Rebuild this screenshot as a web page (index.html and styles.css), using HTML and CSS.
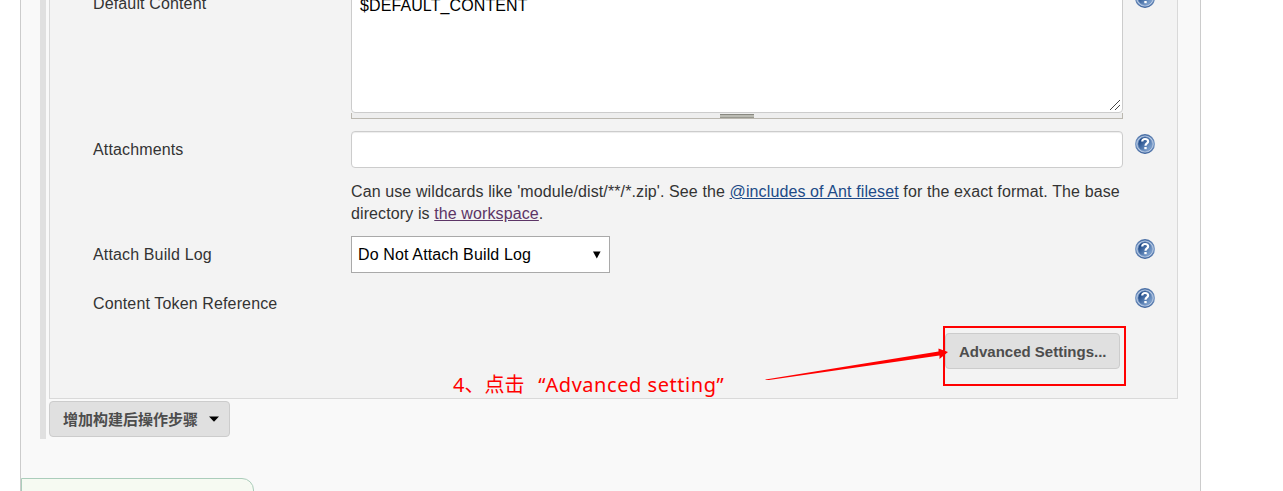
FILE: index.html
```html
<!DOCTYPE html>
<html lang="zh-CN">
<head>
<meta charset="utf-8">
<title>Editable Email Notification</title>
<link rel="stylesheet" href="styles.css">
</head>
<body>
<svg class="defs" width="0" height="0" aria-hidden="true">
  <defs>
    <linearGradient id="ball" x1="0" y1="0" x2="1" y2="1">
      <stop offset="0.2" stop-color="#204a87"/>
      <stop offset="0.9" stop-color="#86aad6"/>
    </linearGradient>
    <linearGradient id="rim" x1="0" y1="0" x2="0" y2="1">
      <stop offset="0" stop-color="#4a6fa5"/>
      <stop offset="0.5" stop-color="#7d9dc8"/>
      <stop offset="1" stop-color="#3f659e"/>
    </linearGradient>
    <symbol id="help" viewBox="0 0 20 20">
      <circle cx="10" cy="10" r="9.3" fill="#b9cbe4" stroke="url(#rim)" stroke-width="1.4"/>
      <circle cx="10" cy="10" r="7.2" fill="url(#ball)" stroke="#6f91c0" stroke-width="0.8"/>
      <path d="M7.2 7.5C7.3 5.8 8.4 5 10 5c1.9 0 3.1.8 3.1 2.4 0 2.1-2.6 2-2.6 4.3" fill="none" stroke="#fff" stroke-width="2.2"/>
      <path d="M9.3 13h2.4v2.2H9.3z" fill="#fff"/>
    </symbol>
  </defs>
</svg>
<main class="page">
  <section class="config">
    <div class="panel">
      <div class="row row-content">
        <span class="label">Default Content</span>
        <div class="field">
          <div class="textarea"><span>$DEFAULT_CONTENT</span>
            <svg class="grip" width="10" height="10" viewBox="0 0 10 10"><path d="M0 10L10 0M5 10l5-5" stroke="#444" stroke-width="1"/></svg>
          </div>
          <div class="handle"><i class="handle-grip"></i></div>
        </div>
        <svg class="help"><use href="#help"/></svg>
      </div>
      <div class="row row-attachments">
        <span class="label">Attachments</span>
        <div class="field"><div class="input"></div></div>
        <svg class="help"><use href="#help"/></svg>
      </div>
      <p class="description">Can use wildcards like 'module/dist/**/*.zip'. See the <a class="link" href="#">@includes of Ant fileset</a> for the exact format. The base<br>directory is <a class="link visited" href="#">the workspace</a>.</p>
      <div class="row row-log">
        <span class="label">Attach Build Log</span>
        <div class="field"><div class="select"><span>Do Not Attach Build Log</span><svg width="8" height="8" viewBox="0 0 8 8"><path d="M0 .5h7.6L3.8 7.5z"/></svg></div></div>
        <svg class="help"><use href="#help"/></svg>
      </div>
      <div class="row row-token">
        <span class="label">Content Token Reference</span>
        <div class="field"></div>
        <svg class="help"><use href="#help"/></svg>
      </div>
      <div class="actions"><button class="button">Advanced Settings...</button></div>
    </div>
    <button class="button add-step"><span>增加构建后操作步骤</span><svg width="10" height="6" viewBox="0 0 10 6"><path d="M0 0.500h10L5 5.800z"/></svg></button>
  </section>
  <div class="footer-bar"></div>
</main>
<div class="note">4、点击<span class="quote-open">“</span><span class="note-latin">Advanced setting”</span></div>
<svg class="arrow" width="190" height="40" viewBox="0 0 190 40"><path d="M5.500 39.500L178.500 11.500V8.500L188 12 179.500 19V15.500L5.500 40.500z" fill="#f00"/></svg>
<div class="highlight"></div>
</body>
</html>
```
FILE: styles.css
```css
* { box-sizing: border-box; }
body {
  margin: 0;
  height: 491px;
  overflow: hidden;
  position: relative;
  background: #fff;
  color: #333;
  font: 16px/22px "Liberation Sans", "Noto Sans CJK SC", sans-serif;
  letter-spacing: .14px;
}
.defs { position: absolute; }
.page {
  width: 1181px;
  height: 491px;
  margin-left: 20px;
  padding-left: 19px;
  border: solid #ccc;
  border-width: 0 1px;
  background: #f9f9f9;
  overflow: hidden;
}
.config {
  width: 1138px;
  height: 439px;
  padding-left: 3px;
  border-left: 6px solid #e0e0e0;
}
.panel {
  width: 1129px;
  height: 399px;
  padding-left: 43px;
  border: 1px solid #d9d9d9;
  border-top: 0;
  background: #f3f3f3;
}
.row { display: grid; grid-template-columns: 258px 772px 20px; }
.row .help { margin-left: 12px; }
.help { width: 20px; height: 20px; }
.row-content { height: 131px; }
.row-content .label { margin-top: -7px; }
.row-content .help { margin-top: -12px; }
.textarea {
  height: 114px;
  margin-top: -1px;
  padding: 0 8px;
  border: 1px solid #ccc;
  border-radius: 0 0 4px 4px;
  background: #fff;
  color: #000;
  display: flex;
  justify-content: space-between;
}
.textarea span { margin-top: -5px; letter-spacing: .1px; }
.grip { align-self: flex-end; margin: 0 -6px 2px 0; }
.handle {
  height: 6px;
  border: solid #bbb8b0;
  border-width: 0 1px 1px;
  background: #eee;
  display: flex;
  justify-content: center;
}
.handle-grip {
  width: 34px;
  height: 4px;
  margin-top: 1px;
  border-top: 1px solid #888880;
  border-bottom: 1px solid #999990;
  background: #bbbbb3;
}
.row-attachments { height: 49px; }
.row-attachments .label, .row-log .label { margin-top: 8px; }
.row-attachments .help, .row-log .help { margin-top: 3px; }
.input {
  height: 37px;
  border: 1px solid #ccc;
  border-radius: 4px;
  background: #fff;
  box-shadow: inset 0 1px 1px rgba(0, 0, 0, .075);
}
.description {
  height: 45px;
  margin: 0 0 11px 258px;
  padding-top: 1px;
  letter-spacing: .11px;
  white-space: nowrap;
}
.link { color: #204a87; }
.visited { color: #5c3566; }
.row-log { height: 49px; }
.select {
  width: 259px;
  height: 37px;
  padding: 0 8px 0 6px;
  border: 1px solid #a9a9a9;
  background: #fff;
  color: #000;
  display: flex;
  align-items: center;
  justify-content: space-between;
}
.row-token { height: 48px; }
.row-token .label { margin-top: 8px; }
.row-token .help { margin-top: 3px; }
.actions { display: flex; justify-content: flex-end; padding-right: 57px; }
.button {
  height: 36px;
  padding: 2px 13px 0;
  border: 1px solid #ccc;
  border-radius: 4px;
  background: #e0e0e0;
  color: #4d4d4d;
  font: bold 15px/20px "Liberation Sans", "Noto Sans CJK SC", sans-serif;
  white-space: nowrap;
}
.actions .button { width: 175px; }
.add-step {
  width: 181px;
  margin-top: 2px;
  padding-right: 0;
  display: flex;
  align-items: center;
  gap: 11px;
}
.add-step svg { flex: none; margin-top: -2px; }
.footer-bar {
  width: 233px;
  height: 40px;
  margin: 39px 0 0 -19px;
  border: 1px solid #abcdbb;
  border-top-right-radius: 12px;
  background: #f6faf2;
}
.note {
  position: absolute;
  left: 453px;
  top: 370px;
  color: #f00;
  font: 20px/30px "Noto Sans", "Noto Sans CJK SC", sans-serif;
  letter-spacing: 0;
  white-space: nowrap;
}
.note-latin { letter-spacing: .55px; }
.quote-open { display: inline-block; width: 21px; text-align: right; }
.arrow { position: absolute; left: 760px; top: 340px; }
.highlight {
  position: absolute;
  left: 943px;
  top: 326px;
  width: 183px;
  height: 60px;
  border: 2px solid #f00;
}
```
